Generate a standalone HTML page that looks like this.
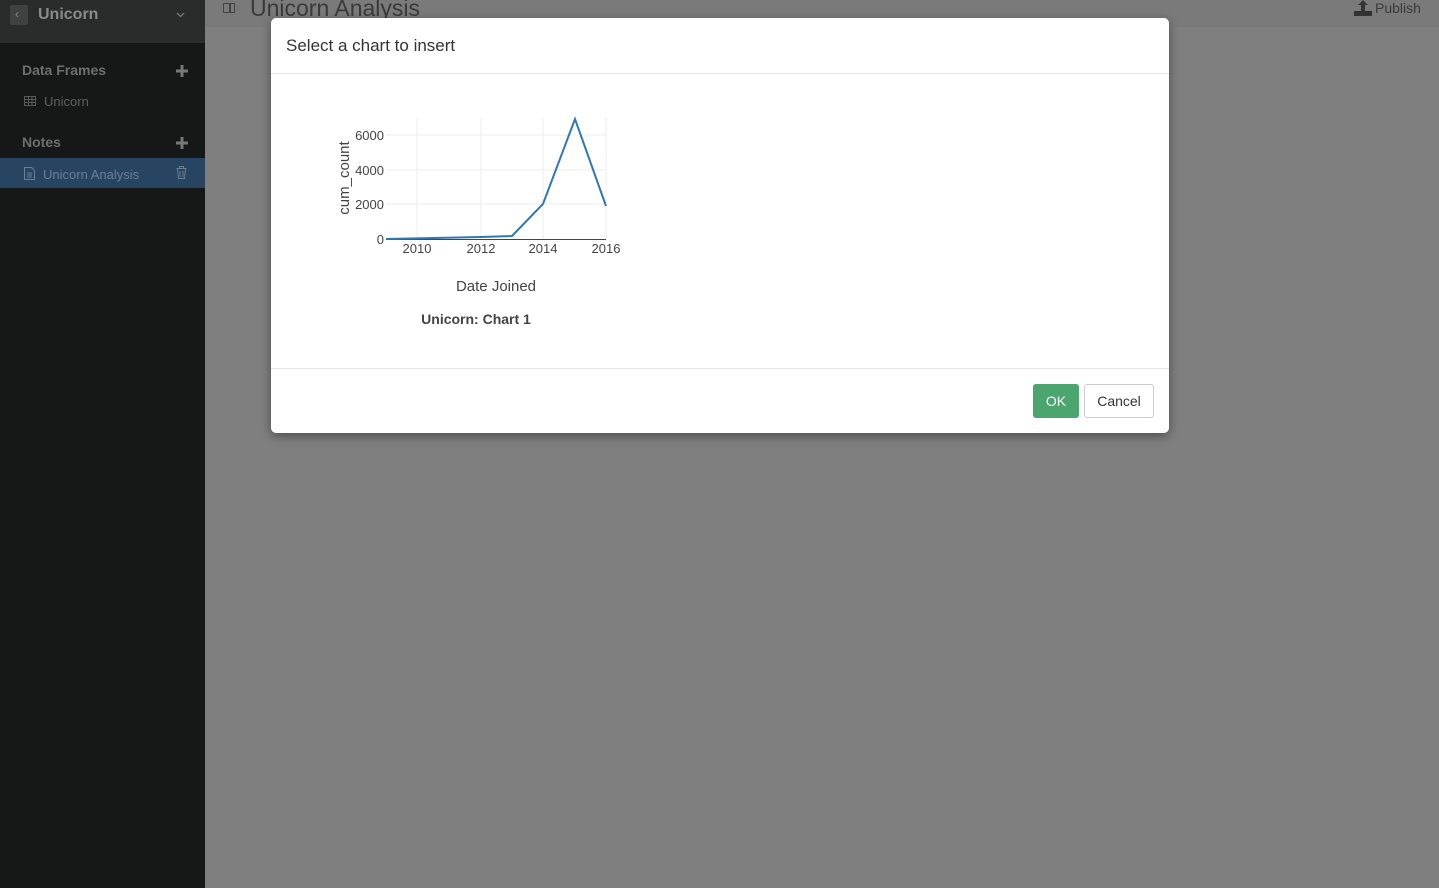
<!DOCTYPE html>
<html><head><style>
body{margin:0;width:1439px;height:888px;overflow:hidden;font-family:"Liberation Sans",sans-serif;background:#7f7f7f;position:relative}
.side{position:absolute;left:0;top:0;width:205px;height:888px;background:#161818}
.sidetop{position:absolute;left:0;top:0;width:205px;height:43px;background:#2a2b2b}
.t{position:absolute;white-space:nowrap}
.topbar{position:absolute;left:205px;top:0;right:0;height:27px;background:#7a7a7a}
.modal{position:absolute;left:271px;top:18px;width:898px;height:415px;background:#fff;border-radius:5px;box-shadow:0 3px 10px rgba(0,0,0,.4)}
</style></head><body>
<div class="side"></div>
<div class="sidetop"></div>
<div style="position:absolute;left:10px;top:5px;width:18px;height:20px;background:#404242;border-radius:2px"></div>
<div class="t" style="left:15px;top:7px;color:#888;font-size:12px">‹</div>
<div class="t" style="left:38px;top:6px;color:#8a8a8a;font-size:16px;font-weight:bold">Unicorn</div>
<svg style="position:absolute;left:176px;top:12px" width="9" height="6"><path d="M1 1l3.5 3.5L8 1" fill="none" stroke="#777" stroke-width="1.3"/></svg>
<div class="t" style="left:22px;top:62px;color:#6e6e6e;font-size:14px;font-weight:bold">Data Frames</div>
<svg style="position:absolute;left:175px;top:64px" width="14" height="14"><path d="M7 1v12M1 7h12" stroke="#777" stroke-width="3"/></svg>
<svg style="position:absolute;left:24px;top:96px" width="12" height="10"><rect x=".5" y=".5" width="11" height="9" fill="none" stroke="#5a5a5a"/><path d="M.5 3.5h11M.5 6.5h11M4.5 .5v9M8 .5v9" stroke="#5a5a5a"/></svg>
<div class="t" style="left:44px;top:94px;color:#5e5e5e;font-size:13px">Unicorn</div>
<div class="t" style="left:22px;top:134px;color:#6e6e6e;font-size:14px;font-weight:bold">Notes</div>
<svg style="position:absolute;left:175px;top:136px" width="14" height="14"><path d="M7 1v12M1 7h12" stroke="#777" stroke-width="3"/></svg>
<div style="position:absolute;left:0;top:158px;width:205px;height:30px;background:#274461"></div>
<svg style="position:absolute;left:24px;top:167px" width="11" height="13"><path d="M.5.5h7l3 3v9h-10z" fill="none" stroke="#6a7e94"/><path d="M3 6h5M3 8h5M3 10h5" stroke="#6a7e94"/></svg>
<div class="t" style="left:43px;top:167px;color:#6a7e94;font-size:13px">Unicorn Analysis</div>
<svg style="position:absolute;left:176px;top:166px" width="11" height="13"><path d="M.5 2.5h10M3.5 2.5v-2h4v2M1.5 2.5l1 10h6l1-10M4 5v6M7 5v6" fill="none" stroke="#6a7e94"/></svg>
<div class="topbar"></div>
<div style="position:absolute;left:223px;top:3px;width:12px;height:10px;border:1.5px solid #444;box-sizing:border-box"></div>
<div style="position:absolute;left:229px;top:3px;width:1.5px;height:10px;background:#444"></div>
<div class="t" style="left:250px;top:-5px;color:#3a3a3a;font-size:23px">Unicorn Analysis</div>
<svg style="position:absolute;left:1354px;top:0" width="18" height="17"><path d="M9 0l-5 5h3v6h4v-6h3z" fill="#333"/><rect x="0" y="11" width="18" height="5" fill="#333"/></svg>
<div class="t" style="left:1375px;top:0px;color:#3a3a3a;font-size:14px">Publish</div>
<div class="modal">
<div class="t" style="left:15px;top:18px;color:#333;font-size:17px">Select a chart to insert</div>
<div style="position:absolute;left:0;top:55px;width:100%;height:1px;background:#e5e5e5"></div>
<div style="position:absolute;left:0;top:350px;width:100%;height:1px;background:#e5e5e5"></div>
<div style="position:absolute;left:762px;top:366px;width:46px;height:34px;background:#4aa56e;border-radius:3px;color:#fff;font-size:14px;text-align:center;line-height:34px">OK</div>
<div style="position:absolute;left:813px;top:366px;width:70px;height:34px;border:1px solid #ccc;box-sizing:border-box;border-radius:3px;color:#333;font-size:14px;text-align:center;line-height:32px">Cancel</div>
</div>
<svg style="position:absolute;left:0;top:0" width="1439" height="888">
<g stroke="#eee" stroke-width="1">
<line x1="417" y1="118" x2="417" y2="239"/><line x1="481" y1="118" x2="481" y2="239"/><line x1="543" y1="118" x2="543" y2="239"/><line x1="606" y1="118" x2="606" y2="239"/>
<line x1="386" y1="135" x2="606" y2="135"/><line x1="386" y1="170" x2="606" y2="170"/><line x1="386" y1="204" x2="606" y2="204"/>
</g>
<line x1="386" y1="239.5" x2="606" y2="239.5" stroke="#444"/>
<polyline points="386,239 481,237 512,236 543,204 575,119 606,206" fill="none" stroke="#2e78b5" stroke-width="2"/>
<g font-family="Liberation Sans,sans-serif" font-size="13" fill="#444">
<text x="384" y="140" text-anchor="end">6000</text><text x="384" y="175" text-anchor="end">4000</text><text x="384" y="209" text-anchor="end">2000</text><text x="384" y="244" text-anchor="end">0</text>
<text x="417" y="253" text-anchor="middle">2010</text><text x="481" y="253" text-anchor="middle">2012</text><text x="543" y="253" text-anchor="middle">2014</text><text x="606" y="253" text-anchor="middle">2016</text>
<text x="349" y="178" font-size="15" text-anchor="middle" transform="rotate(-90 349 178)">cum_count</text>
<text x="496" y="291" font-size="15" text-anchor="middle">Date Joined</text>
<text x="476" y="324" font-size="14" font-weight="bold" text-anchor="middle">Unicorn: Chart 1</text>
</g>
</svg>
</body></html>
